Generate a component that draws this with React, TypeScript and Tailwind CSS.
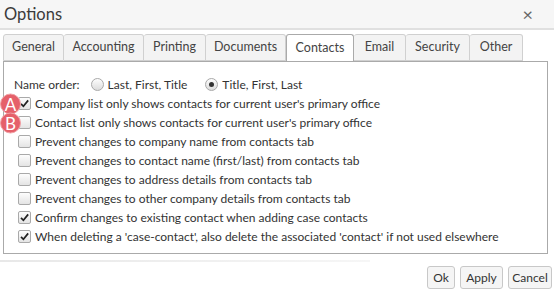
import { useState } from "react";

const TABS: [string, number][] = [
  ["General", 61],
  ["Accounting", 80],
  ["Printing", 62],
  ["Documents", 80],
  ["Contacts", 68],
  ["Email", 52],
  ["Security", 64],
  ["Other", 53],
];

const BUTTONS: [string, number][] = [
  ["Ok", 28],
  ["Apply", 43],
  ["Cancel", 44],
];

const OPTIONS: { label: string; checked: boolean; badge?: string }[] = [
  { label: "Company list only shows contacts for current user's primary office", checked: true, badge: "A" },
  { label: "Contact list only shows contacts for current user's primary office", checked: false, badge: "B" },
  { label: "Prevent changes to company name from contacts tab", checked: false },
  { label: "Prevent changes to contact name (first/last) from contacts tab", checked: false },
  { label: "Prevent changes to address details from contacts tab", checked: false },
  { label: "Prevent changes to other company details from contacts tab", checked: false },
  { label: "Confirm changes to existing contact when adding case contacts", checked: true },
  { label: "When deleting a 'case-contact', also delete the associated 'contact' if not used elsewhere", checked: true },
];

function Check({ checked }: { checked: boolean }) {
  return (
    <span className="relative flex h-[13px] w-[13px] shrink-0 items-center justify-center rounded-[2px] border border-[#a9a9a9] bg-gradient-to-b from-[#fdfdfd] to-[#e4e4e4]">
      {checked && (
        <svg viewBox="0 0 12 12" className="h-[11px] w-[11px]">
          <path d="M2.2 6.4 L4.8 9 L10 2.6" fill="none" stroke="#222" strokeWidth="1.9" />
        </svg>
      )}
    </span>
  );
}

function Radio({ checked }: { checked: boolean }) {
  return (
    <span className="flex h-[13px] w-[13px] shrink-0 items-center justify-center rounded-full border border-[#a9a9a9] bg-gradient-to-b from-[#fdfdfd] to-[#dcdcdc]">
      {checked && <span className="h-[5px] w-[5px] rounded-full bg-[#333]" />}
    </span>
  );
}

function Badge({ letter }: { letter: string }) {
  return (
    <span className="absolute -left-[14px] top-1/2 z-10 flex h-[21px] w-[21px] -translate-y-1/2 items-center justify-center rounded-full border border-[#f1a0a5] bg-[#e5606a] text-[17px] leading-none text-white">
      {letter}
    </span>
  );
}

export default function App() {
  const [active] = useState("Contacts");
  return (
    <div className="flex h-[293px] w-[554px] flex-col bg-white text-[12px] text-[#333]" style={{ fontFamily: "Lato, sans-serif" }}>
      <div className="flex h-[30px] items-center justify-between border-b-2 border-[#e0e0e0] bg-[#f6f6f6] pl-[4px] pr-[21px]">
        <span className="text-[16.5px] text-[#3b3b3b]">Options</span>
        <span className="text-[18px] leading-none text-[#666]">×</span>
      </div>
      <div className="flex flex-col px-[3px] pt-[4px]">
        <div className="flex h-[27px] items-stretch">
          {TABS.map(([t, w]) => (
            <div
              key={t}
              style={{ width: w }}
              className={
                t === active
                  ? "-mb-px flex items-center justify-center rounded-t-[3px] border border-b-0 border-[#aaa] bg-white text-[12.5px] text-[#444]"
                  : "flex items-center justify-center rounded-t-[3px] border border-l-0 border-[#d0d0d0] bg-[#f3f3f3] text-[12.5px] text-[#444] first:border-l"
              }
            >
              {t}
            </div>
          ))}
        </div>
        <div className="mr-[3px] flex h-[193px] flex-col border border-[#aaa] pl-[10px] pt-[13px]">
          <div className="flex h-[19px] items-center">
            <span>Name order:</span>
            <span className="ml-[11px]">
              <Radio checked={false} />
            </span>
            <span className="ml-[4px]">Last, First, Title</span>
            <span className="ml-[18px]">
              <Radio checked={true} />
            </span>
            <span className="ml-[4px]">Title, First, Last</span>
          </div>
          {OPTIONS.map((o) => (
            <div key={o.label} className="relative flex h-[19px] items-center gap-[4px] pl-[4px]">
              {o.badge && <Badge letter={o.badge} />}
              <Check checked={o.checked} />
              <span>{o.label}</span>
            </div>
          ))}
        </div>
      </div>
      <div className="mt-[6px] h-[2px] w-[370px] bg-gradient-to-r from-[#e8e8e8] to-[#f6f6f6]" />
      <div className="flex justify-end gap-[5px] pr-[2px] pt-[4px]">
        {BUTTONS.map(([b, w]) => (
          <button
            key={b}
            style={{ width: w }}
            className="h-[23px] rounded-[3px] border border-[#c8c8c8] bg-[#f5f5f5] text-[12px] text-[#333]"
          >
            {b}
          </button>
        ))}
      </div>
    </div>
  );
}
